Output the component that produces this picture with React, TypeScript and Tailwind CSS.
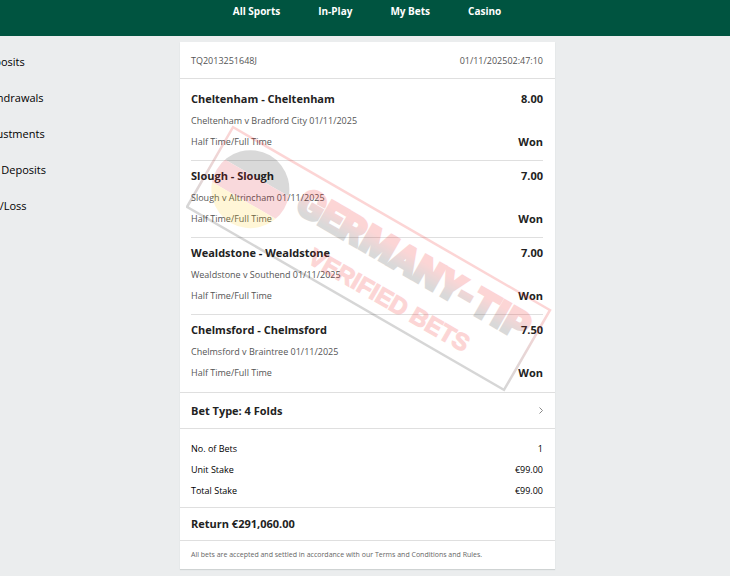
const navLinks = ["All Sports", "In-Play", "My Bets", "Casino"];

const sideLinks = ["Deposits", "Withdrawals", "Adjustments", "Net Deposits", "Win/Loss"];

const selections = [
  { name: "Cheltenham - Cheltenham", odds: "8.00", event: "Cheltenham v Bradford City 01/11/2025" },
  { name: "Slough - Slough", odds: "7.00", event: "Slough v Altrincham 01/11/2025" },
  { name: "Wealdstone - Wealdstone", odds: "7.00", event: "Wealdstone v Southend 01/11/2025" },
  { name: "Chelmsford - Chelmsford", odds: "7.50", event: "Chelmsford v Braintree 01/11/2025" },
];

const totals = [
  { label: "No. of Bets", value: "1" },
  { label: "Unit Stake", value: "€99.00" },
  { label: "Total Stake", value: "€99.00" },
];

function VerifiedStamp() {
  return (
    <svg
      viewBox="0 0 368 270"
      className="pointer-events-none absolute top-[82px] left-[6px] h-[270px] w-[368px]"
    >
      <defs>
        <linearGradient id="stamp-frame" x1="0" y1="0" x2="0" y2="1">
          <stop offset="0" stopColor="#f41d1d" />
          <stop offset="1" stopColor="#222222" />
        </linearGradient>
        <linearGradient id="stamp-title" gradientUnits="userSpaceOnUse" x1="0" y1="-35" x2="0" y2="-3">
          <stop offset="0.3" stopColor="#f41d1d" />
          <stop offset="0.9" stopColor="#333333" />
        </linearGradient>
        <clipPath id="stamp-ball">
          <circle cx="-137" cy="-1" r="39" />
        </clipPath>
      </defs>
      <g transform="translate(182.5 134.5) rotate(30)" opacity="0.18">
        <rect x="-183" y="-46" width="366" height="92" fill="none" stroke="url(#stamp-frame)" strokeWidth="2.5" />
        <g clipPath="url(#stamp-ball)" opacity="0.85">
          <rect x="-178" y="-41" width="82" height="27" fill="#111111" />
          <rect x="-178" y="-14" width="82" height="26" fill="#dd1122" />
          <rect x="-178" y="12" width="82" height="27" fill="#ffcc00" />
        </g>
        <text
          x="-89"
          y="-4"
          fontSize="39"
          fontWeight="900"
          fill="url(#stamp-title)"
          stroke="url(#stamp-title)"
          strokeWidth="3"
          fontFamily="Roboto, sans-serif"
        >
          GERMANY-TIP
        </text>
        <text
          x="-52"
          y="34"
          fontSize="24"
          fontWeight="700"
          fill="#f41d1d"
          stroke="#f41d1d"
          strokeWidth="1.2"
          fontFamily="'Liberation Sans', sans-serif"
        >
          VERIFIED BETS
        </text>
      </g>
    </svg>
  );
}

function SelectionRow({ name, odds, event }: { name: string; odds: string; event: string }) {
  return (
    <li className="border-b border-[#dfdfdf] pt-1 pb-2 leading-[20px] last:border-b-0">
      <div className="flex justify-between text-[11px] leading-[22px] font-bold text-[#222222]">
        <h2>{name}</h2>
        <span>{odds}</span>
      </div>
      <p className="text-[9px] leading-[22px] text-[#555555]">{event}</p>
      <div className="flex justify-between">
        <span className="text-[9px] text-[#555555]">Half Time/Full Time</span>
        <span className="text-[11px] font-bold text-[#222222]">Won</span>
      </div>
    </li>
  );
}

export default function App() {
  return (
    <div className="min-h-screen overflow-hidden bg-[#ebedee] font-['Open_Sans',sans-serif] text-[#222222]">
      <header className="h-9 bg-[#005440]">
        <nav className="flex justify-center gap-[38px] pl-1 text-[10px] leading-[22px] font-bold text-white">
          {navLinks.map((link) => (
            <a key={link} href="#">
              {link}
            </a>
          ))}
        </nav>
      </header>

      <div className="grid grid-cols-[180px_minmax(0,1fr)_175px]">
        <aside className="pt-2">
          <ul className="-ml-5 text-[11px] leading-9 text-black">
            {sideLinks.map((link) => (
              <li key={link}>
                <a href="#">{link}</a>
              </li>
            ))}
          </ul>
        </aside>

        <main className="relative mt-[6px] mb-[7px] bg-white shadow-[0_1px_1px_#cfd3d3]">
          <div className="flex justify-between border-b border-[#dfdfdf] pt-[2px] pr-3 pl-[11px] text-[9px] leading-[34px] text-[#555555]">
            <span>TQ2013251648J</span>
            <span>01/11/202502:47:10</span>
          </div>

          <ul className="border-b border-[#dfdfdf] pt-[5px] pr-3 pb-px pl-[11px]">
            {selections.map((selection) => (
              <SelectionRow key={selection.name} {...selection} />
            ))}
          </ul>

          <button
            type="button"
            className="flex w-full items-center justify-between border-b border-[#dfdfdf] pr-3 pl-[11px] text-[11px] leading-[35px] font-bold"
          >
            Bet Type: 4 Folds
            <svg viewBox="0 0 4 7" className="h-[7px] w-1" fill="none" stroke="#888888">
              <path d="M0.5 0.5L3.5 3.5L0.5 6.5" />
            </svg>
          </button>

          <dl className="border-b border-[#dfdfdf] pt-[9px] pr-3 pb-[6px] pl-[11px] text-[9px] leading-[21px] text-black">
            {totals.map((total) => (
              <div key={total.label} className="flex justify-between">
                <dt>{total.label}</dt>
                <dd>{total.value}</dd>
              </div>
            ))}
          </dl>

          <p className="border-b border-[#dfdfdf] px-[11px] text-[11px] leading-8 font-bold">Return €291,060.00</p>
          <p className="px-[11px] text-[7px] leading-7 text-[#666666]">
            All bets are accepted and settled in accordance with our Terms and Conditions and Rules.
          </p>

          <VerifiedStamp />
        </main>
      </div>
    </div>
  );
}
